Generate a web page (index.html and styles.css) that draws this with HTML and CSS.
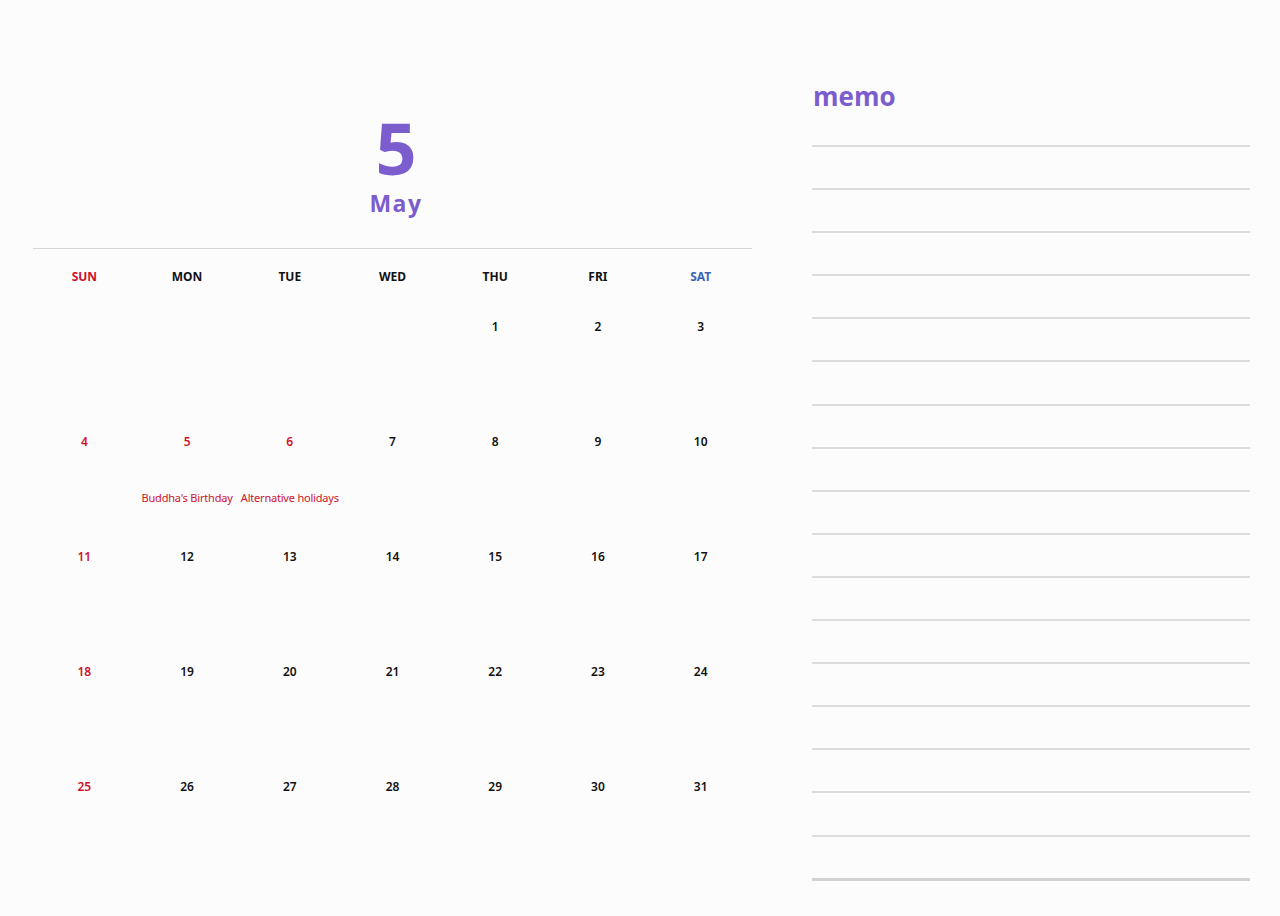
FILE: index.html
```html
<!DOCTYPE html>
<html>
<head>
<meta charset="utf-8">
<link rel="stylesheet" href="styles.css">
</head>
<body>
<div class="page">
  <section class="cal">
    <header class="title">
      <div class="num">5</div>
      <div class="month">May</div>
    </header>
    <div class="grid">
      <div class="wd sun">SUN</div><div class="wd">MON</div><div class="wd">TUE</div><div class="wd">WED</div><div class="wd">THU</div><div class="wd">FRI</div><div class="wd sat">SAT</div>

      <div class="day"></div><div class="day"></div><div class="day"></div><div class="day"></div><div class="day"><span class="d">1</span></div><div class="day"><span class="d">2</span></div><div class="day"><span class="d">3</span></div>

      <div class="day red"><span class="d">4</span></div>
      <div class="day red"><span class="d">5</span><span class="hol">Buddha's Birthday</span></div>
      <div class="day red"><span class="d">6</span><span class="hol">Alternative holidays</span></div>
      <div class="day"><span class="d">7</span></div><div class="day"><span class="d">8</span></div><div class="day"><span class="d">9</span></div><div class="day"><span class="d">10</span></div>

      <div class="day red"><span class="d">11</span></div><div class="day"><span class="d">12</span></div><div class="day"><span class="d">13</span></div><div class="day"><span class="d">14</span></div><div class="day"><span class="d">15</span></div><div class="day"><span class="d">16</span></div><div class="day"><span class="d">17</span></div>

      <div class="day red"><span class="d">18</span></div><div class="day"><span class="d">19</span></div><div class="day"><span class="d">20</span></div><div class="day"><span class="d">21</span></div><div class="day"><span class="d">22</span></div><div class="day"><span class="d">23</span></div><div class="day"><span class="d">24</span></div>

      <div class="day red"><span class="d">25</span></div><div class="day"><span class="d">26</span></div><div class="day"><span class="d">27</span></div><div class="day"><span class="d">28</span></div><div class="day"><span class="d">29</span></div><div class="day"><span class="d">30</span></div><div class="day"><span class="d">31</span></div>
    </div>
  </section>
  <section class="memo">
    <h2 class="memo-title">memo</h2>
    <div class="lines">
      <div class="line"></div><div class="line"></div><div class="line"></div><div class="line"></div><div class="line"></div><div class="line"></div>
      <div class="line"></div><div class="line"></div><div class="line"></div><div class="line"></div><div class="line"></div><div class="line"></div>
      <div class="line"></div><div class="line"></div><div class="line"></div><div class="line"></div><div class="line"></div><div class="line last"></div>
    </div>
  </section>
</div>
</body>
</html>
```
FILE: styles.css
```css
* { box-sizing: border-box; }
html, body {
  margin: 0;
  padding: 0;
  background: #fdfcfd;
  font-family: "Noto Sans", "Open Sans", sans-serif;
  color: #111;
}
.page {
  width: 1280px;
  height: 916px;
  display: flex;
  overflow: hidden;
}
.cal {
  margin-left: 33px;
  width: 719px;
  padding-top: 111px;
}
.title {
  display: flex;
  flex-direction: column;
  align-items: center;
  color: #7b5dcd;
  font-family: "Open Sans", sans-serif;
  font-weight: 700;
  padding-left: 7px;
  padding-bottom: 31px;
  border-bottom: 1px solid #d6d4d8;
}
.num {
  font-size: 72px;
  line-height: 72px;
}
.month {
  margin-top: 6px;
  font-size: 23px;
  line-height: 28px;
  letter-spacing: 1.5px;
}
.grid {
  display: grid;
  grid-template-columns: repeat(7, 1fr);
  grid-auto-rows: 115px;
  grid-template-rows: 50px;
}
.wd {
  text-align: center;
  padding-top: 21px;
  font-size: 12px;
  line-height: 14px;
  font-weight: 700;
  color: #111;
}
.wd.sun { color: #d0112b; }
.wd.sat { color: #3a64b2; }
.day {
  display: flex;
  flex-direction: column;
  align-items: center;
  padding-top: 21px;
}
.d {
  font-size: 12px;
  line-height: 14px;
  font-weight: 600;
}
.day.red .d { color: #d0112b; }
.hol {
  margin-top: 42px;
  font-size: 11px;
  line-height: 14px;
  color: #d0112b;
  white-space: nowrap;
  letter-spacing: -0.2px;
}
.memo {
  margin-left: 60px;
  width: 438px;
  padding-top: 81px;
}
.memo-title {
  margin: 0 0 0 1px;
  font-family: "Open Sans", sans-serif;
  font-size: 26px;
  line-height: 30px;
  font-weight: 700;
  color: #7b5dcd;
}
.lines {
  margin-top: 34px;
  display: flex;
  flex-direction: column;
  gap: 41.1px;
}
.line {
  height: 2px;
  background: #dcdbdd;
}
.line.last {
  height: 3px;
  background: #d2d2d4;
}
```
